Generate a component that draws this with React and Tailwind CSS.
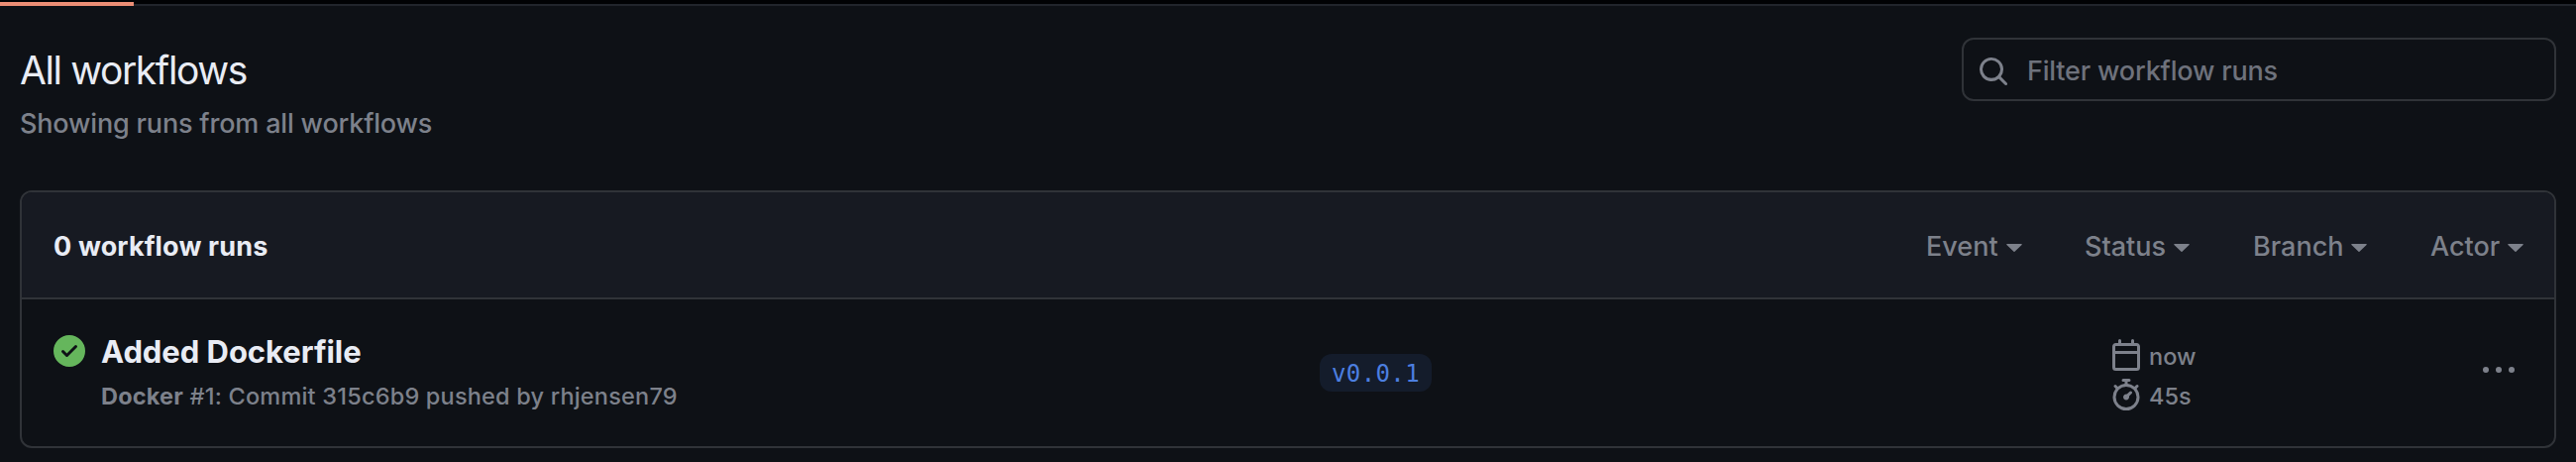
const Caret = () => (
  <svg width="16" height="8" viewBox="0 0 16 8" fill="currentColor" className="mt-0.5 ml-2 shrink-0">
    <path d="M0.8 0h14.4c.6 0 .8.5.4.9L8.5 7.8a.7.7 0 0 1-1 0L.4.9C0 .5.2 0 .8 0Z" />
  </svg>
);

const Octicon = ({ d, className }) => (
  <svg width="32" height="32" viewBox="0 0 16 16" fill="currentColor" className={className}>
    <path d={d} />
  </svg>
);

const SEARCH =
  "M10.68 11.74a6 6 0 0 1-7.922-8.982 6 6 0 0 1 8.982 7.922l3.04 3.04a.749.749 0 0 1-.326 1.275.749.749 0 0 1-.734-.215ZM11.5 7a4.499 4.499 0 1 0-8.997 0A4.499 4.499 0 0 0 11.5 7Z";
const CHECK =
  "M8 16A8 8 0 1 1 8 0a8 8 0 0 1 0 16Zm3.78-9.72a.751.751 0 0 0-.018-1.042.751.751 0 0 0-1.042-.018L6.75 9.19 5.28 7.72a.751.751 0 0 0-1.042.018.751.751 0 0 0-.018 1.042l2 2a.75.75 0 0 0 1.06 0Z";
const CALENDAR =
  "M4.75 0a.75.75 0 0 1 .75.75V2h5V.75a.75.75 0 0 1 1.5 0V2h1.25c.966 0 1.75.784 1.75 1.75v10.5A1.75 1.75 0 0 1 13.25 16H2.75A1.75 1.75 0 0 1 1 14.25V3.75C1 2.784 1.784 2 2.75 2H4V.75A.75.75 0 0 1 4.75 0ZM2.5 7.5v6.75c0 .138.112.25.25.25h10.5a.25.25 0 0 0 .25-.25V7.5Zm10.75-4H2.75a.25.25 0 0 0-.25.25V6h11V3.75a.25.25 0 0 0-.25-.25Z";
const STOPWATCH =
  "M5.75.75A.75.75 0 0 1 6.5 0h3a.75.75 0 0 1 0 1.5h-.75v1l-.001.041a6.724 6.724 0 0 1 3.464 1.435l.007-.006.75-.75a.749.749 0 0 1 1.275.326.749.749 0 0 1-.215.734l-.75.75-.006.007a6.75 6.75 0 1 1-10.548 0L2.72 5.03l-.75-.75a.751.751 0 0 1 .018-1.042.751.751 0 0 1 1.042-.018l.75.75.007.006A6.72 6.72 0 0 1 7.25 2.541V1.5h-.75a.75.75 0 0 1-.75-.75ZM8 14.5a5.25 5.25 0 1 0-.001-10.501A5.25 5.25 0 0 0 8 14.5Zm.389-6.7 1.33-1.33a.75.75 0 1 1 1.061 1.06L9.45 8.861A1.503 1.503 0 0 1 8 10.75a1.499 1.499 0 1 1 .389-2.95Z";

const Filter = ({ label, className }) => (
  <button className={`flex items-center justify-between whitespace-nowrap ${className}`}>
    <span>{label}</span>
    <Caret />
  </button>
);

export default function App() {
  return (
    <div className="h-[466px] w-[2600px] overflow-hidden bg-[#0e1116] font-['Inter',sans-serif] font-[450] text-[#7d818b]">
      <div className="flex h-1.5 items-end bg-[#010204]">
        <div className="h-1 w-[135px] bg-[#ec8e75]" />
        <div className="h-0.5 flex-1 bg-[#22252c]" />
      </div>

      <header className="flex h-[186px] items-start justify-between px-5">
        <div>
          <h1 className="mt-[35px] h-[60px] text-[39px] leading-[60px] font-normal tracking-[-1.4px] whitespace-nowrap text-[#e9ecf4]">
            All workflows
          </h1>
          <p className="mt-[3px] text-[27px] leading-[42px] tracking-[-0.17px] whitespace-nowrap">
            Showing runs from all workflows
          </p>
        </div>
        <div className="mt-8 flex h-16 w-[600px] items-center rounded-xl border-2 border-[#303338] pl-3.5">
          <Octicon d={SEARCH} className="mt-1" />
          <span className="mt-1 ml-[18px] text-[27px] leading-[42px] tracking-[-0.18px] whitespace-nowrap text-[#6e727c]">
            Filter workflow runs
          </span>
        </div>
      </header>

      <section className="mx-5 h-[260px] overflow-hidden rounded-xl border-2 border-[#303338]">
        <div className="flex h-[108px] items-center justify-between border-b-2 border-[#303338] bg-[#171a22] pt-1 pr-[33px] pl-8 text-[27px] leading-[42px]">
          <h2 className="font-[650] tracking-[0.15px] whitespace-nowrap text-[#e9ecf4]">0 workflow runs</h2>
          <div className="flex gap-16">
            <Filter label="Event" className="w-[96px]" />
            <Filter label="Status" className="w-[106px]" />
            <Filter label="Branch" className="w-[115px]" />
            <Filter label="Actor" className="w-[92px]" />
          </div>
        </div>

        <div className="flex h-[148px] pl-8">
          <Octicon d={CHECK} className="mt-9 shrink-0 text-[#65b65c]" />
          <div className="ml-4 w-[1230px] pt-[29px] whitespace-nowrap">
            <h3 className="text-[31px] leading-[48px] font-[650] tracking-[-0.05px] text-[#e9ecf4]">Added Dockerfile</h3>
            <p className="mt-[3px] text-[23.5px] leading-9 tracking-[0.2px]">
              <b className="font-[650]">Docker</b> #1: Commit 315c6b9 pushed by rhjensen79
            </p>
          </div>
          <div className="mt-[55px] flex h-[38px] w-[113px] items-center justify-center rounded-xl bg-[#141c2b] pt-0.5 font-['DejaVu_Sans_Mono',monospace] text-[24px] tracking-[0.4px] text-[#4c7fe0]">
            v0.0.1
          </div>
          <div className="ml-[685px] w-[150px] pt-10 text-[23.5px] leading-8">
            <div className="flex h-8 items-center gap-[7px]">
              <Octicon d={CALENDAR} />
              <span className="mt-[3px]">now</span>
            </div>
            <div className="mt-2 flex h-8 items-center gap-[7px]">
              <Octicon d={STOPWATCH} />
              <span className="mt-[3px]">45s</span>
            </div>
          </div>
          <svg width="32" height="6" viewBox="0 0 32 6" fill="currentColor" className="mt-[68px] ml-[226px]">
            <circle cx="3" cy="3" r="3" />
            <circle cx="16" cy="3" r="3" />
            <circle cx="29" cy="3" r="3" />
          </svg>
        </div>
      </section>
    </div>
  );
}
